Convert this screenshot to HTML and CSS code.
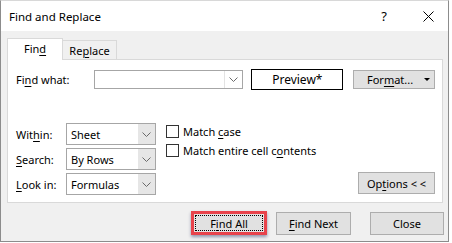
FILE: index.html
```html
<!DOCTYPE html>
<html>
<head>
<meta charset="utf-8">
<link rel="stylesheet" href="styles.css">
</head>
<body>
<div class="window">
  <div class="titlebar">
    <span class="title">Find and Replace</span>
    <span class="help">?</span>
    <svg class="close-x" width="11" height="11" viewBox="0 0 11 11"><path d="M0.5 0.5 L10.5 10.5 M10.5 0.5 L0.5 10.5" stroke="#000" stroke-width="1" fill="none"/></svg>
  </div>
  <div class="content">
    <div class="tabs">
      <div class="tab active">Fin<u>d</u></div>
      <div class="tab">Re<u>p</u>lace</div>
    </div>
    <div class="panel">
      <div class="row-find">
        <span class="label lbl-find">Fi<u>n</u>d what:</span>
        <div class="combo">
          <span class="combo-text"></span>
          <span class="combo-btn"><svg width="9" height="5" viewBox="0 0 9 5"><path d="M0.5 0.5 L4.5 4.5 L8.5 0.5" stroke="#6a6a6a" fill="none"/></svg></span>
        </div>
        <div class="preview">Preview*</div>
        <div class="btn format"><span>For<u>m</u>at...</span><span class="tri"></span></div>
      </div>
      <div class="options-area">
        <div class="selects">
          <div class="sel-row">
            <span class="label lbl-sel">Wit<u>h</u>in:</span>
            <div class="select"><span class="sel-text">Sheet</span><span class="sel-btn"><svg width="9" height="5" viewBox="0 0 9 5"><path d="M0.5 0.5 L4.5 4.5 L8.5 0.5" stroke="#6a6a6a" fill="none"/></svg></span></div>
          </div>
          <div class="sel-row">
            <span class="label lbl-sel"><u>S</u>earch:</span>
            <div class="select"><span class="sel-text">By Rows</span><span class="sel-btn"><svg width="9" height="5" viewBox="0 0 9 5"><path d="M0.5 0.5 L4.5 4.5 L8.5 0.5" stroke="#6a6a6a" fill="none"/></svg></span></div>
          </div>
          <div class="sel-row">
            <span class="label lbl-sel"><u>L</u>ook in:</span>
            <div class="select"><span class="sel-text">Formulas</span><span class="sel-btn"><svg width="9" height="5" viewBox="0 0 9 5"><path d="M0.5 0.5 L4.5 4.5 L8.5 0.5" stroke="#6a6a6a" fill="none"/></svg></span></div>
          </div>
        </div>
        <div class="checks">
          <div class="check"><span class="box"></span><span>Match <u>c</u>ase</span></div>
          <div class="check"><span class="box"></span><span>Match entire cell c<u>o</u>ntents</span></div>
        </div>
        <div class="btn options">Op<u>t</u>ions &lt; &lt;</div>
      </div>
    </div>
    <div class="footer">
      <div class="btn find-all"><span class="focus">F<u>i</u>nd All</span></div>
      <div class="btn find-next"><u>F</u>ind Next</div>
      <div class="btn close">Close</div>
    </div>
  </div>
</div>
</body>
</html>
```

FILE: styles.css
```css
* { box-sizing: border-box; }
html, body { margin: 0; padding: 0; background: #ffffff; }
body {
  font-family: "Segoe UI", "Noto Sans", "Open Sans", sans-serif;
  font-size: 11px;
  color: #000;
}
u { text-decoration: underline; text-underline-offset: 2px; text-decoration-thickness: 1px; }

.window {
  width: 449px;
  height: 242px;
  border: 1px solid #8c8c8c;
  border-top-color: #d8d8d8;
  background: #f0f0f0;
  display: flex;
  flex-direction: column;
}

.titlebar {
  flex: none;
  height: 30px;
  background: #ffffff;
  display: flex;
  align-items: center;
  padding-left: 8px;
}
.title { flex: 1; font-size: 11.5px; }
.help { font-size: 13px; margin-right: 36px; }
.close-x { margin-right: 14px; }

.content {
  flex: 1;
  padding: 7px 4px 0 6px;
  display: flex;
  flex-direction: column;
}

.tabs {
  display: flex;
  align-items: flex-end;
  height: 22px;
  margin-bottom: -1px;
  position: relative;
  z-index: 1;
}
.tab {
  height: 19px;
  margin-bottom: 1px;
  width: 55px;
  margin-left: -1px;
  border: 1px solid #d9d9d9;
  border-bottom: none;
  background: #f0f0f0;
  display: flex;
  align-items: center;
  justify-content: center;
}
.tab.active {
  height: 22px;
  margin-bottom: 0;
  margin-left: 0;
  width: 56px;
  background: #ffffff;
  padding-bottom: 2px;
}

.panel {
  width: 436px;
  height: 144px;
  border: 1px solid #d9d9d9;
  background: #ffffff;
  display: flex;
  flex-direction: column;
  justify-content: space-between;
  padding: 9px 7px 7px 8px;
}

.label { white-space: nowrap; }
.row-find {
  display: flex;
  align-items: center;
  height: 21px;
}
.lbl-find { width: 78px; }
.combo {
  width: 150px;
  height: 19px;
  border: 1px solid #a6a6a6;
  display: flex;
}
.combo-text { flex: 1; }
.combo-btn {
  width: 18px;
  border-left: 1px solid #e3e3e3;
  display: flex;
  align-items: center;
  justify-content: center;
}
.preview {
  margin-left: 8px;
  width: 92px;
  height: 21px;
  border: 1px solid #000;
  display: flex;
  align-items: center;
  justify-content: center;
  font-size: 12px;
}
.btn {
  background: #e1e1e1;
  border: 1px solid #adadad;
  display: flex;
  align-items: center;
  justify-content: center;
  white-space: nowrap;
}
.format {
  margin-left: 10px;
  width: 82px;
  height: 19px;
  position: relative;
  padding-right: 8px;
}
.tri {
  position: absolute;
  right: 4px;
  top: 7px;
  width: 0;
  height: 0;
  border-left: 3px solid transparent;
  border-right: 3px solid transparent;
  border-top: 3px solid #000;
}

.options-area {
  display: flex;
  align-items: flex-end;
}
.selects { display: flex; flex-direction: column; gap: 3px; }
.sel-row { display: flex; align-items: center; }
.lbl-sel { width: 50px; }
.select {
  width: 90px;
  height: 22px;
  border: 1px solid #a6a6a6;
  display: flex;
}
.sel-text { flex: 1; padding-left: 4px; display: flex; align-items: center; }
.sel-btn {
  width: 17px;
  background: #e6e6e6;
  display: flex;
  align-items: center;
  justify-content: center;
}

.checks {
  align-self: flex-start;
  margin-left: 10px;
  padding-top: 2px;
  display: flex;
  flex-direction: column;
  gap: 6px;
}
.check { display: flex; align-items: center; height: 13px; white-space: nowrap; }
.box {
  width: 13px;
  height: 13px;
  border: 1px solid #333;
  background: #fff;
  margin-right: 4px;
  flex: none;
}
.options {
  margin-left: auto;
  margin-bottom: 1px;
  width: 77px;
  height: 22px;
}

.footer {
  margin-top: 8px;
  display: flex;
  justify-content: flex-end;
  align-items: flex-start;
}
.find-all {
  width: 76px;
  height: 24px;
  border: 3px solid #e8434b;
  box-shadow: 0 2px 3px rgba(30, 40, 90, 0.45);
  padding: 1px;
}
.focus {
  flex: 1;
  align-self: stretch;
  border: 1px dotted #000;
  display: flex;
  align-items: center;
  justify-content: center;
}
.find-next {
  margin-left: 9px;
  margin-top: 1px;
  width: 75px;
  height: 23px;
}
.close {
  margin-left: 19px;
  margin-top: 1px;
  width: 74px;
  height: 23px;
}
```
